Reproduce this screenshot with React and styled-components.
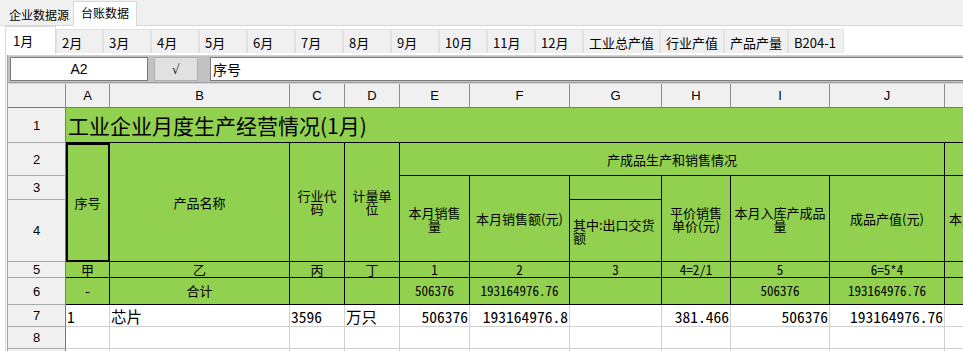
import React from "react";
import styled, { createGlobalStyle, css } from "styled-components";

const GlobalStyle = createGlobalStyle`
  html, body {
    margin: 0;
    padding: 0;
    background: #fff;
  }
  body {
    font-family: "Noto Sans CJK SC", "Microsoft YaHei", sans-serif;
    color: #000;
  }
`;

const Window = styled.div`
  width: 963px;
  height: 351px;
  overflow: hidden;
  background: #fff;
`;

const TopTabBar = styled.div`
  display: flex;
  align-items: flex-end;
  height: 25px;
  padding-left: 2px;
  background: #f0f0f0;
  border-bottom: 1px solid #d9d9d9;
`;

const TopTab = styled.div`
  box-sizing: border-box;
  width: ${(p) => p.$w}px;
  height: ${(p) => (p.$active ? 25 : 22)}px;
  margin-bottom: ${(p) => (p.$active ? -1 : 0)}px;
  padding: 3px 0 0 ${(p) => (p.$active ? 7 : 6)}px;
  font-size: 12px;
  line-height: 16px;
  white-space: nowrap;
  background: ${(p) => (p.$active ? "#fff" : "#f0f0f0")};
  border: 1px solid ${(p) => (p.$active ? "#d9d9d9" : "transparent")};
  border-bottom: none;
  position: relative;
`;

const MonthTabBar = styled.div`
  display: flex;
  align-items: flex-end;
  height: 27px;
  padding-left: 5px;
`;

const MonthTab = styled.div`
  box-sizing: border-box;
  width: ${(p) => p.$w}px;
  height: ${(p) => (p.$active ? 28 : 24)}px;
  margin-bottom: ${(p) => (p.$active ? -1 : 0)}px;
  padding: ${(p) => (p.$active ? "5px 0 0 7px" : "4px 0 0 5px")};
  font-size: 13px;
  line-height: 17px;
  white-space: nowrap;
  background: ${(p) => (p.$active ? "#fff" : "#f0f0f0")};
  border: 1px solid ${(p) => (p.$active ? "#d9d9d9" : "#e2e2e2")};
  border-bottom: none;
  position: relative;
`;

const SheetPanel = styled.div`
  margin-left: 5px;
  padding: 2px 0 0 1px;
  border-left: 1px solid #d9d9d9;
`;

const SheetFrame = styled.div`
  border-left: 1px solid #a0a0a0;
`;

const FormulaBar = styled.div`
  display: flex;
  align-items: stretch;
  height: 24px;
  padding: 1px 0 1px 2px;
  background: #c2c2c2;
  border-top: 1px solid #d2d2d2;
  border-bottom: 1px solid #a0a0a0;
`;

const NameBox = styled.div`
  box-sizing: border-box;
  width: 138px;
  display: flex;
  align-items: center;
  justify-content: center;
  background: #fff;
  border: 1px solid #7a7a7a;
  font-family: "Liberation Sans", sans-serif;
  font-size: 14px;
`;

const CheckButton = styled.div`
  box-sizing: border-box;
  width: 44px;
  margin-left: 6px;
  display: flex;
  align-items: center;
  justify-content: center;
  background: #e1e1e1;
  border: 1px solid #b0b0b0;
  font-family: "DejaVu Sans", sans-serif;
  font-size: 13px;
  color: #333;
`;

const FormulaInput = styled.div`
  flex: 1;
  margin-left: 12px;
  display: flex;
  align-items: center;
  padding-left: 2px;
  background: #fff;
  border: 1px solid #7a7a7a;
  border-right: none;
  font-size: 14px;
`;

const Grid = styled.div`
  display: grid;
  grid-template-columns: 58px 44px 180px 55px 55px 70px 100px 92px 69px 99px 115px 100px;
  grid-template-rows: 24px 35px 33px 24px 62px 16px 27px 22px 22px 22px;
  width: max-content;
  border-top: 1px solid #d4d4d4;
`;

const HeadCell = styled.div`
  box-sizing: border-box;
  grid-column: ${(p) => p.$col};
  grid-row: ${(p) => p.$row};
  display: flex;
  align-items: center;
  justify-content: center;
  background: #f0f0f0;
  border-right: 1px solid ${(p) => (p.$side ? "#7a7a7a" : "#8e8e8e")};
  border-bottom: 1px solid ${(p) => (p.$side ? "#a8a8a8" : "#7a7a7a")};
  font-family: "Liberation Sans", sans-serif;
  font-size: 13px;
`;

const kinds = {
  title: css`
    font-size: 21px;
    line-height: 24px;
    padding-left: 2px;
    white-space: nowrap;
  `,
  head: css`
    font-size: 13px;
    line-height: 13px;
    white-space: normal;
    word-break: break-all;
  `,
  code: css`
    font-family: "Noto Sans Mono CJK SC", "Liberation Mono", "Noto Sans CJK SC", monospace;
    font-size: 13px;
    line-height: 14px;
    white-space: nowrap;
  `,
  data: css`
    font-family: "Noto Sans Mono CJK SC", "Liberation Mono", "Noto Sans CJK SC", monospace;
    font-size: 15.5px;
    line-height: 18px;
    padding: 0 1px;
    white-space: nowrap;
  `,
};

const justify = { left: "flex-start", right: "flex-end", center: "center" };

const Cell = styled.div`
  box-sizing: border-box;
  grid-column: ${(p) => p.$col};
  grid-row: ${(p) => p.$row};
  display: flex;
  align-items: center;
  justify-content: ${(p) => justify[p.$align || "center"]};
  text-align: ${(p) => p.$align || "center"};
  padding: 0 3px;
  overflow: hidden;
  background: ${(p) => (p.$green ? "#92d050" : "#fff")};
  border-style: solid;
  border-color: ${(p) => (p.$green ? "#000" : "#d0d0d0")};
  border-width: 0 ${(p) => (p.$noRight ? 0 : 1)}px 1px 0;
  ${(p) => kinds[p.$kind || "head"]}
  ${(p) =>
    p.$selected &&
    css`
      outline: 2px solid #000;
      outline-offset: -2px;
    `}
`;

const topTabs = [
  { label: "企业数据源", w: 71 },
  { label: "台账数据", w: 64, active: true },
];

const monthTabs = [
  { label: "1月", w: 51, active: true },
  { label: "2月", w: 47 },
  ...["3月", "4月", "5月", "6月", "7月", "8月", "9月", "10月", "11月", "12月"].map((label) => ({ label, w: 48 })),
  { label: "工业总产值", w: 77 },
  { label: "行业产值", w: 64 },
  { label: "产品产量", w: 64 },
  { label: "B204-1", w: 56 },
];

const letters = ["A", "B", "C", "D", "E", "F", "G", "H", "I", "J", "K"];

// merged header block of the ledger sheet
const headerCells = [
  { col: "2", row: "3 / 6", text: "序号", selected: true },
  { col: "3", row: "3 / 6", text: "产品名称" },
  { col: "4", row: "3 / 6", text: "行业代码" },
  { col: "5", row: "3 / 6", text: "计量单位" },
  { col: "6 / 12", row: "3", text: "产成品生产和销售情况" },
  { col: "12", row: "3", text: "" },
  { col: "6", row: "4 / 6", text: "本月销售量" },
  { col: "7", row: "4 / 6", text: "本月销售额(元)" },
  { col: "8", row: "4", text: "" },
  { col: "8", row: "5", text: "其中:出口交货额", align: "left" },
  { col: "9", row: "4 / 6", text: "平价销售单价(元)" },
  { col: "10", row: "4 / 6", text: "本月入库产成品量" },
  { col: "11", row: "4 / 6", text: "成品产值(元)" },
  { col: "12", row: "4 / 6", text: "本月出口交货值" },
];

const codeRow = ["甲", "乙", "丙", "丁", "1", "2", "3", "4=2/1", "5", "6=5*4", "7"];
const sumRow = ["-", "合计", "", "", "506376", "193164976.76", "", "", "506376", "193164976.76", ""];
const dataRow = [
  ["1", "left"],
  ["芯片", "left"],
  ["3596", "left"],
  ["万只", "left"],
  ["506376", "right"],
  ["193164976.8", "right"],
  ["", "right"],
  ["381.466", "right"],
  ["506376", "right"],
  ["193164976.76", "right"],
  ["", "right"],
];

const App = () => {
  return (
    <Window>
      <GlobalStyle />
      <TopTabBar>
        {topTabs.map((t) => (
          <TopTab key={t.label} $w={t.w} $active={t.active}>
            {t.label}
          </TopTab>
        ))}
      </TopTabBar>
      <MonthTabBar>
        {monthTabs.map((t) => (
          <MonthTab key={t.label} $w={t.w} $active={t.active}>
            {t.label}
          </MonthTab>
        ))}
      </MonthTabBar>
      <SheetPanel>
        <SheetFrame>
          <FormulaBar>
            <NameBox>A2</NameBox>
            <CheckButton>√</CheckButton>
            <FormulaInput>序号</FormulaInput>
          </FormulaBar>
          <Grid>
            <HeadCell $col="1" $row="1" />
            {letters.map((l, i) => (
              <HeadCell key={l} $col={`${i + 2}`} $row="1">
                {l}
              </HeadCell>
            ))}
            {[1, 2, 3, 4, 5, 6, 7, 8, 9].map((n) => (
              <HeadCell key={n} $side $col="1" $row={`${n + 1}`}>
                {n}
              </HeadCell>
            ))}

            <Cell $green $kind="title" $align="left" $col="2 / 13" $row="2" $noRight>
              工业企业月度生产经营情况(1月)
            </Cell>

            {headerCells.map((c) => (
              <Cell
                key={`${c.col}-${c.row}`}
                $green
                $col={c.col}
                $row={c.row}
                $align={c.align}
                $selected={c.selected}
              >
                {c.text}
              </Cell>
            ))}

            {codeRow.map((t, i) => (
              <Cell key={`code-${i}`} $green $kind="code" $col={`${i + 2}`} $row="6">
                {t}
              </Cell>
            ))}

            {sumRow.map((t, i) => (
              <Cell key={`sum-${i}`} $green $kind="code" $col={`${i + 2}`} $row="7">
                {t}
              </Cell>
            ))}

            {dataRow.map(([t, align], i) => (
              <Cell key={`data-${i}`} $kind="data" $align={align} $col={`${i + 2}`} $row="8">
                {t}
              </Cell>
            ))}

            {[9, 10].map((r) =>
              letters.map((l, i) => (
                <Cell key={`${l}${r}`} $kind="data" $col={`${i + 2}`} $row={`${r}`} />
              ))
            )}
          </Grid>
        </SheetFrame>
      </SheetPanel>
    </Window>
  );
};

export default App;
